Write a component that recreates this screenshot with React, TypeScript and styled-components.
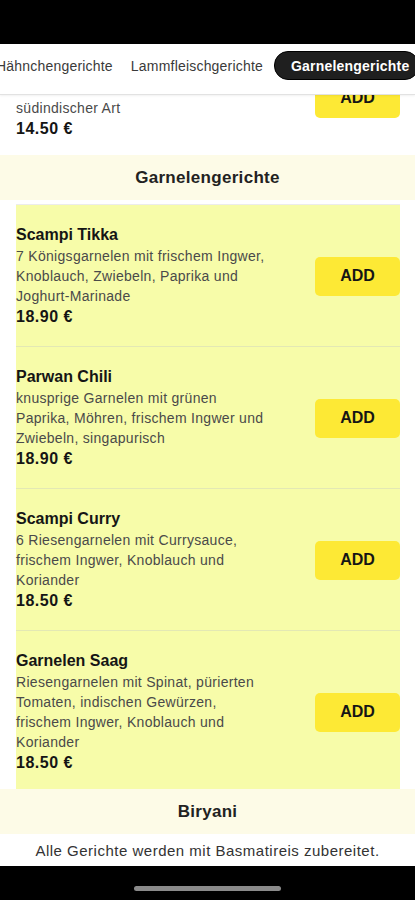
import React from 'react';
import styled, { createGlobalStyle } from 'styled-components';

const GlobalStyle = createGlobalStyle`
    html, body {
        margin: 0;
        padding: 0;
        background: #000;
    }
    body {
        font-family: "Liberation Sans", Arial, sans-serif;
        -webkit-font-smoothing: antialiased;
    }
`;

const Screen = styled.div`
    width: 415px;
    height: 900px;
    display: flex;
    flex-direction: column;
    background: #fff;
    overflow: hidden;
`;

const StatusBar = styled.div`
    height: 44px;
    flex-shrink: 0;
    background: #000;
`;

const TabBar = styled.div`
    height: 50px;
    flex-shrink: 0;
    background: #fff;
    border-bottom: 1px solid #e2e2e2;
    box-shadow: 0 1px 2px rgba(0, 0, 0, 0.06);
    overflow: hidden;
    position: relative;
    z-index: 2;
`;

const TabStrip = styled.div`
    display: flex;
    align-items: center;
    gap: 4px;
    margin-left: -11px;
    margin-top: 7px;
    white-space: nowrap;
`;

const Tab = styled.div<{ $active?: boolean }>`
    height: 27px;
    display: flex;
    align-items: center;
    padding: ${(p) => (p.$active ? '0 9px 0 16px' : '0 7px')};
    border-radius: 14px;
    font-size: 14px;
    letter-spacing: 0.2px;
    font-weight: ${(p) => (p.$active ? 700 : 400)};
    color: ${(p) => (p.$active ? '#fff' : '#3a3a3a')};
    background: ${(p) => (p.$active ? '#1f1f1f' : 'transparent')};
    border: ${(p) => (p.$active ? '1px solid #000' : 'none')};
`;

const Scroller = styled.div`
    flex: 1;
    overflow: hidden;
`;

// scroll offset of the list: the previous dish is partly under the tab bar
const ScrollInner = styled.div`
    margin-top: -58px;
    display: flex;
    flex-direction: column;
`;

const SectionHeader = styled.div`
    height: 45px;
    display: flex;
    align-items: center;
    justify-content: center;
    background: #fdfbe7;
    font-size: 17px;
    letter-spacing: 0.3px;
    font-weight: 700;
    color: #222;
`;

const Card = styled.div`
    margin: 4px 15px 0 16px;
    border-top: 1px solid #ececec;
    background: #f7fca9;
`;

const Item = styled.div<{ $last?: boolean }>`
    display: flex;
    align-items: center;
    padding: 19px 0 ${(p) => (p.$last ? '15px' : '18px')};
    border-bottom: ${(p) => (p.$last ? 'none' : '1px solid #e3e8b4')};
`;

const Info = styled.div`
    flex: 1;
    padding-right: 45px;
`;

const Title = styled.div`
    font-size: 16px;
    line-height: 22px;
    font-weight: 700;
    color: #151515;
`;

const Desc = styled.div`
    font-size: 14px;
    line-height: 20px;
    letter-spacing: 0.3px;
    color: #4a4a4a;
`;

const Price = styled.div`
    font-size: 16px;
    line-height: 22px;
    letter-spacing: 0.5px;
    font-weight: 700;
    color: #151515;
`;

const AddButton = styled.button`
    width: 85px;
    height: 39px;
    flex-shrink: 0;
    border: none;
    border-radius: 5px;
    background: #fde935;
    font-family: inherit;
    font-size: 16px;
    font-weight: 700;
    color: #151515;
`;

const PlainItems = styled.div`
    padding: 0 15px 0 16px;
`;

const Note = styled.div`
    height: 33px;
    display: flex;
    align-items: center;
    justify-content: center;
    font-size: 15px;
    letter-spacing: 0.5px;
    color: #333;
`;

const HomeBar = styled.div`
    height: 34px;
    flex-shrink: 0;
    background: #000;
    display: flex;
    justify-content: center;
    align-items: center;
`;

const HomeIndicator = styled.div`
    width: 147px;
    height: 5px;
    border-radius: 3px;
    background: #8a8a8a;
    margin-top: 10px;
`;

type Dish = { name: string; desc: string; price: string };

const shrimp: Dish[] = [
    {
        name: 'Scampi Tikka',
        desc: '7 Königsgarnelen mit frischem Ingwer, Knoblauch, Zwiebeln, Paprika und Joghurt-Marinade',
        price: '18.90 €',
    },
    {
        name: 'Parwan Chili',
        desc: 'knusprige Garnelen mit grünen Paprika, Möhren, frischem Ingwer und Zwiebeln, singapurisch',
        price: '18.90 €',
    },
    {
        name: 'Scampi Curry',
        desc: '6 Riesengarnelen mit Currysauce, frischem Ingwer, Knoblauch und Koriander',
        price: '18.50 €',
    },
    {
        name: 'Garnelen Saag',
        desc: 'Riesengarnelen mit Spinat, pürierten Tomaten, indischen Gewürzen, frischem Ingwer, Knoblauch und Koriander',
        price: '18.50 €',
    },
];

const App = () => {
    return (
        <Screen>
            <GlobalStyle />
            <StatusBar />
            <TabBar>
                <TabStrip>
                    <Tab>Hähnchengerichte</Tab>
                    <Tab>Lammfleischgerichte</Tab>
                    <Tab $active>Garnelengerichte</Tab>
                </TabStrip>
            </TabBar>
            <Scroller>
                <ScrollInner>
                    <PlainItems>
                        <Item $last>
                            <Info>
                                <Title>Lamm Madras</Title>
                                <Desc>Lamm in einer scharfen Soße nach südindischer Art</Desc>
                                <Price>14.50 €</Price>
                            </Info>
                            <AddButton>ADD</AddButton>
                        </Item>
                    </PlainItems>
                    <SectionHeader>Garnelengerichte</SectionHeader>
                    <Card>
                        {shrimp.map((dish, i) => (
                            <Item key={dish.name} $last={i === shrimp.length - 1}>
                                <Info>
                                    <Title>{dish.name}</Title>
                                    <Desc>{dish.desc}</Desc>
                                    <Price>{dish.price}</Price>
                                </Info>
                                <AddButton>ADD</AddButton>
                            </Item>
                        ))}
                    </Card>
                    <SectionHeader>Biryani</SectionHeader>
                    <Note>Alle Gerichte werden mit Basmatireis zubereitet.</Note>
                </ScrollInner>
            </Scroller>
            <HomeBar>
                <HomeIndicator />
            </HomeBar>
        </Screen>
    );
};

export default App;
